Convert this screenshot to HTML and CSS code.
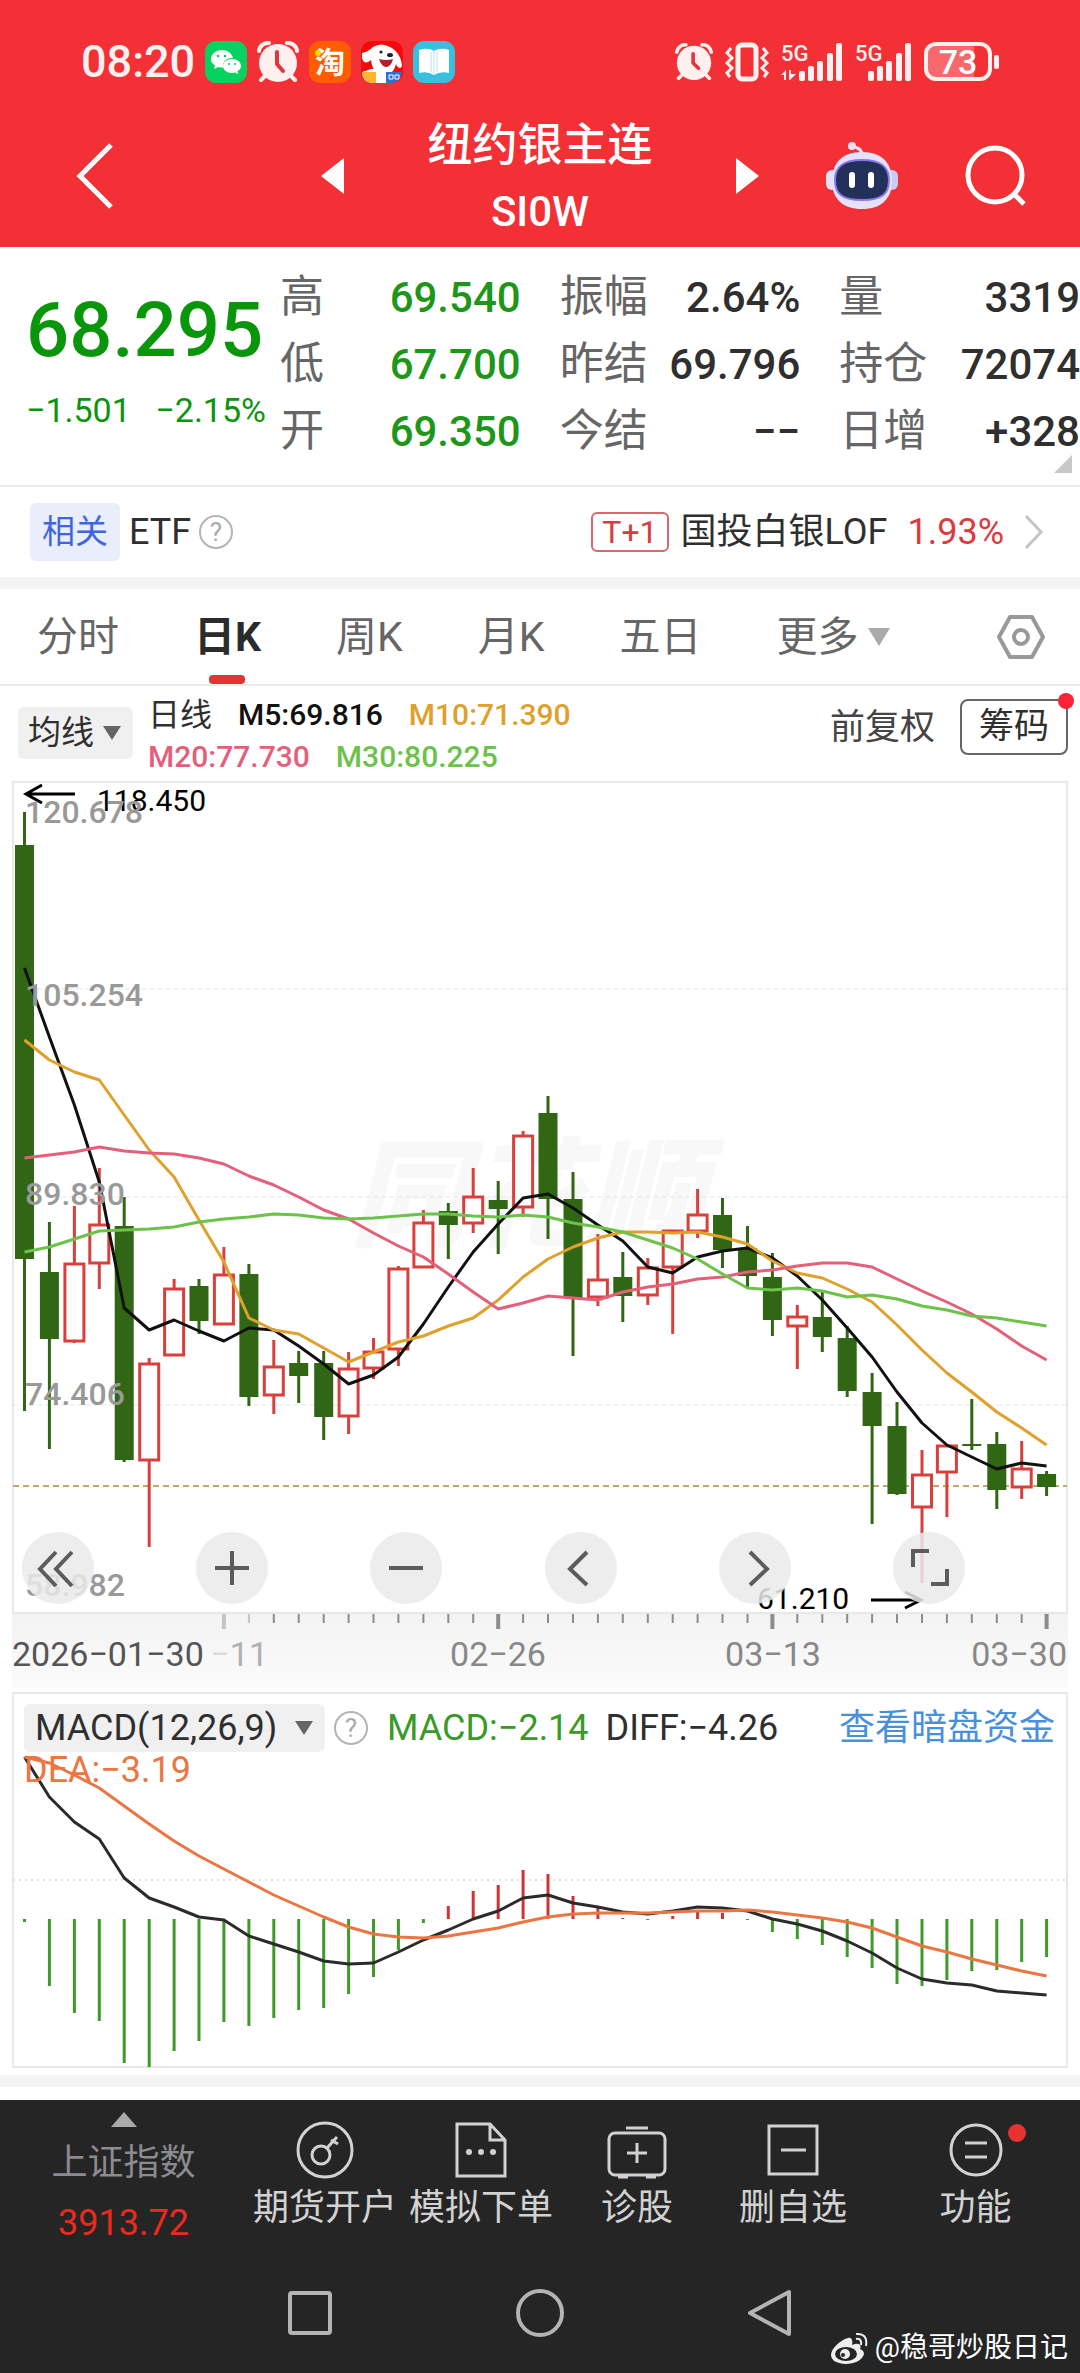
FILE: index.html
```html
<!DOCTYPE html>
<html lang="zh-CN">
<head>
  <meta charset="UTF-8" />
  <meta name="viewport" content="width=device-width, initial-scale=1.0"/>
  <title>纽约银主连</title>
  <link rel="stylesheet" href="styles.css">
</head>
<body>
  <header class="top">
    <div class="status-bar">
      <div class="status-left">
        <span class="clock">08:20</span>
        <svg class="app-icon" viewBox="0 0 42 42">
          <rect width="42" height="42" rx="11" fill="#07d160"/>
          <path d="M17 9c-6 0-11 4-11 9 0 3 1.500 5 4 6.500l-1 3.500 4-2q2 .6 5 .5c-1-6 4-10 10-9.500C27 12 22 9 17 9z" fill="#fff"/>
          <path d="M27 18c-5 0-9 3-9 7s4 7 9 7l3-.5 3 1.800-.6-3c2-1 3.600-3 3.600-5.300 0-4-4-7-9-7z" fill="#fff"/>
          <g fill="#07d160"><circle cx="13" cy="15" r="1.300"/><circle cx="20" cy="15" r="1.300"/><circle cx="24" cy="23" r="1.100"/><circle cx="30" cy="23" r="1.100"/></g>
        </svg>
        <svg class="app-icon" viewBox="0 0 42 42">
          <path d="M2 10a9 9 0 0 1 10-8M40 10a9 9 0 0 0-10-8M9 34l-5 5M33 34l5 5" stroke="#fff0f0" stroke-width="4" stroke-linecap="round" fill="none"/>
          <circle cx="21" cy="22" r="19" fill="#fff0f0"/>
          <path d="M20 11v12l6 7" stroke="#e0373b" stroke-width="4" fill="none" stroke-linecap="round"/>
        </svg>
        <svg class="app-icon" viewBox="0 0 42 42">
          <rect width="42" height="42" rx="11" fill="#ff5c00"/>
          <text x="21" y="32" class="tao">淘</text>
          <circle cx="9" cy="12" r="3" fill="#ffd800"/>
        </svg>
        <svg class="app-icon" viewBox="0 0 42 42">
          <rect width="42" height="42" rx="11" fill="#f5090b"/>
          <path d="M1 12q6-1 11-6 8-5 17 0c6 3 11 9 12 18 0 4-4 4-6-1-2 8-6 11-12 10-8 0-12-5-13-14-4 4-8 3-9-2z" fill="#fff"/>
          <path d="M18 18q7 2 14 0-2 8-7 8-5-1-7-8z" fill="#b3202a"/>
          <ellipse cx="29" cy="14" rx="3" ry="2" fill="#222"/><circle cx="20" cy="11" r="1.600" fill="#222"/>
          <path d="M10 28h16v14H11Q1 41 1 31z" fill="#fff"/>
          <path d="M1 31h14v11h-4Q2 41 1 31z" fill="#ffb62c"/>
          <path d="M25 31h16q-1 10-10 11h-6z" fill="#2f6fdd"/>
          <path d="M28 34h4v4h-4zM34 34h4v4h-4z" fill="none" stroke="#fff"/>
        </svg>
        <svg class="app-icon" viewBox="0 0 42 42">
          <rect width="42" height="42" rx="11" fill="#39c0df"/>
          <path d="M6 9q9-3 15 1 6-4 15-1v23q-9-2-15 2-6-4-15-2z" fill="#fff"/>
          <path d="M21 10v23M24 11v20M18 11v20" stroke="#d8f0f7" stroke-width="2"/>
        </svg>
      </div>
      <div class="status-right">
        <svg width="38" height="42" viewBox="0 0 42 42">
          <path d="M2 10a9 9 0 0 1 10-8M40 10a9 9 0 0 0-10-8M9 34l-5 5M33 34l5 5" stroke="#fff0f0" stroke-width="4" stroke-linecap="round" fill="none"/>
          <circle cx="21" cy="22" r="19" fill="#fff0f0"/>
          <path d="M20 12v10l6 6" stroke="#e0373b" stroke-width="4" fill="none" stroke-linecap="round"/>
        </svg>
        <svg width="44" height="40" viewBox="0 0 44 40" fill="none" stroke="#fff0f0" stroke-width="3">
          <rect x="13" y="3" width="18" height="34" rx="4" stroke-width="5"/>
          <path d="M6 6L2 11l5 5-5 5 5 5-5 5 3 4M38 6l4 5-5 5 5 5-5 5 5 5-3 4"/>
        </svg>
        <svg class="signal" width="62" height="40" viewBox="0 0 62 40" fill="#fff0f0">
          <text x="0" y="19" class="net">5G</text>
          <path d="M0 33l5-5v10H3v-5zM8 28h2v4h5l-6 6H8z"/>
          <rect x="18" y="29" width="6" height="10" rx="2"/><rect x="27" y="24" width="6" height="15" rx="2"/><rect x="36" y="19" width="6" height="20" rx="2"/><rect x="46" y="11" width="6" height="28" rx="2"/><rect x="55" y="1" width="6" height="38" rx="2"/>
        </svg>
        <svg class="signal" width="57" height="40" viewBox="0 0 57 40" fill="#fff0f0">
          <text x="0" y="19" class="net">5G</text>
          <rect x="13" y="29" width="6" height="10" rx="2"/><rect x="22" y="24" width="6" height="15" rx="2"/><rect x="31" y="19" width="6" height="20" rx="2"/><rect x="41" y="11" width="6" height="28" rx="2"/><rect x="50" y="1" width="6" height="38" rx="2"/>
        </svg>
        <svg width="76" height="40" viewBox="0 0 76 40">
          <path d="M12 4h38v32H12q-8 0-8-8V12q0-8 8-8z" fill="#f8696d"/>
          <rect x="2" y="2" width="64" height="35" rx="10" fill="none" stroke="#fff0f0" stroke-width="4"/>
          <rect x="70" y="13" width="5" height="14" rx="2" fill="#fff0f0"/>
          <text x="34" y="32" class="charge">73</text>
        </svg>
      </div>
    </div>
    <nav class="title-bar">
      <button class="icon-btn back" aria-label="返回">
        <svg width="40" height="68" viewBox="0 0 40 68"><path d="M36 3L5 34l31 31" fill="none" stroke="#fff" stroke-width="5"/></svg>
      </button>
      <div class="title-center">
        <button class="icon-btn" aria-label="上一个"><svg width="23" height="36" viewBox="0 0 23 36"><path d="M23 0v36L0 18z" fill="#fff"/></svg></button>
        <h1>纽约银主连<span>SI0W</span></h1>
        <button class="icon-btn" aria-label="下一个"><svg width="23" height="36" viewBox="0 0 23 36"><path d="M0 0v36l23-18z" fill="#fff"/></svg></button>
      </div>
      <div class="title-tools">
        <button class="icon-btn" aria-label="助手">
          <svg width="74" height="68" viewBox="0 0 74 68">
            <path d="M27 5q10 0 11 10" fill="none" stroke="#e6d9fa" stroke-width="3"/><circle cx="27" cy="4" r="4" fill="#f3dcee"/>
            <rect x="1" y="28" width="12" height="20" rx="6" fill="#e3e3fb"/><rect x="61" y="28" width="12" height="20" rx="6" fill="#c9cdf6"/>
            <path d="M37 10c20 0 30 11 30 29S56 67 37 67 7 57 7 39s10-29 30-29z" fill="#e4e3fb"/>
            <path d="M37 18c18 0 27 6 27 20s-7 20-27 20S10 52 10 38s9-20 27-20z" fill="#22305a" stroke="#8a78e8" stroke-width="2"/>
            <rect x="24" y="30" width="6" height="16" rx="3" fill="#fff"/><rect x="43" y="30" width="6" height="16" rx="3" fill="#fff"/>
          </svg>
        </button>
        <button class="icon-btn" aria-label="搜索">
          <svg width="62" height="62" viewBox="0 0 62 62" fill="none" stroke="#fff" stroke-width="5"><circle cx="30" cy="30" r="27"/><path d="M48 48l11 11"/></svg>
        </button>
      </div>
    </nav>
  </header>

  <main>
    <section class="quote">
      <div class="price-box">
        <div class="price">68.295</div>
        <div class="change"><span>−1.501</span><span>−2.15%</span></div>
      </div>
      <dl class="stats">
        <div><dt>高</dt><dd class="down">69.540</dd></div>
        <div><dt>振幅</dt><dd>2.64%</dd></div>
        <div><dt>量</dt><dd>3319</dd></div>
        <div><dt>低</dt><dd class="down">67.700</dd></div>
        <div><dt>昨结</dt><dd>69.796</dd></div>
        <div><dt>持仓</dt><dd>72074</dd></div>
        <div><dt>开</dt><dd class="down">69.350</dd></div>
        <div><dt>今结</dt><dd>−−</dd></div>
        <div><dt>日增</dt><dd>+328</dd></div>
      </dl>
      <svg class="corner" width="18" height="18" viewBox="0 0 18 18"><path d="M18 0v18H0z" fill="#c8c8c8"/></svg>
    </section>

    <section class="related">
      <span class="badge">相关</span>
      <span class="etf">ETF</span>
      <svg class="help" viewBox="0 0 36 36"><circle cx="18" cy="18" r="16"/><text x="18" y="27">?</text></svg>
      <a class="fund" href="#">
        <span class="t1">T+1</span>
        <span>国投白银LOF</span>
        <span class="up">1.93%</span>
        <svg width="20" height="36" viewBox="0 0 20 36"><path d="M2 2l15 16L2 34" fill="none" stroke="#c4c4c4" stroke-width="3"/></svg>
      </a>
    </section>

    <nav class="tabs">
      <button>分时</button>
      <button class="active">日K</button>
      <button>周K</button>
      <button>月K</button>
      <button>五日</button>
      <button class="more">更多<i class="caret"></i></button>
      <button class="settings" aria-label="设置">
        <svg width="50" height="46" viewBox="0 0 50 46" fill="none" stroke="#999" stroke-width="4"><path d="M14 3h22l11 20-11 20H14L3 23z" stroke-linejoin="round"/><circle cx="25" cy="23" r="7"/></svg>
      </button>
    </nav>

    <section class="ma-bar">
      <div class="chip ma-chip">
        <select aria-label="主图指标"><option>均线</option></select>
        <i class="caret"></i>
      </div>
      <div class="ma-legend">
        <div><span class="cycle">日线</span><span class="m5">M5:69.816</span><span class="m10">M10:71.390</span></div>
        <div><span class="m20">M20:77.730</span><span class="m30">M30:80.225</span></div>
      </div>
      <button class="adjust">前复权</button>
      <button class="chips-btn">筹码</button>
    </section>

    <section class="kline">
      <svg id="kline" viewBox="0 0 1080 908">
        <defs>
          <linearGradient id="axisBg" x1="0" y1="0" x2="0" y2="1"><stop offset="0" stop-color="#f3f3f3"/><stop offset="1" stop-color="#fbfbfb"/></linearGradient>
        </defs>
        <rect x="12" y="834" width="1056" height="74" fill="url(#axisBg)"/>
        <rect x="13" y="2" width="1054" height="831" class="frame"/>
        <text x="350" y="457" class="watermark">同花顺</text>
        <path d="M13 209H1067M13 417H1067M13 625H1067" class="grid-line"/>
        <path d="M13 706H1067" class="last-line"/>
        <g id="candles"></g>
        <g id="averages"></g>
        <g class="arrow"><path d="M75 14H26M42 5L26 14l16 9"/><path d="M871 820h50M905 812l16 8-16 8"/></g>
        <g class="extreme"><text x="97" y="31">118.450</text><text x="757" y="829">61.210</text></g>
        <g class="scale">
          <text x="25" y="43">120.678</text>
          <text x="25" y="226">105.254</text>
          <text x="25" y="425">89.830</text>
          <text x="25" y="625">74.406</text>
          <text x="25" y="816">58.982</text>
        </g>
        <g id="ticks"></g>
        <g class="dates">
          <text x="12" y="886" class="first">2026−01−30</text>
          <text x="268" y="886" class="faded" text-anchor="end"><tspan class="ghost">−</tspan>11</text>
          <text x="498" y="886" text-anchor="middle">02−26</text>
          <text x="773" y="886" text-anchor="middle">03−13</text>
          <text x="1067" y="886" text-anchor="end">03−30</text>
        </g>
      </svg>
      <div class="controls">
        <button aria-label="最早"><svg viewBox="0 0 72 72"><path d="M34 20L18 37l16 17M50 20L34 37l16 17"/></svg></button>
        <button aria-label="放大"><svg viewBox="0 0 72 72"><path d="M36 19v34M19 36h34"/></svg></button>
        <button aria-label="缩小"><svg viewBox="0 0 72 72"><path d="M19 36h34"/></svg></button>
        <button aria-label="左移"><svg viewBox="0 0 72 72"><path d="M42 20L25 37l17 16"/></svg></button>
        <button aria-label="右移"><svg viewBox="0 0 72 72"><path d="M31 20l17 17-17 16"/></svg></button>
        <button aria-label="全屏"><svg viewBox="0 0 72 72"><path d="M20 35V19h16M38 52h16V37"/></svg></button>
      </div>
    </section>

    <section class="macd">
      <svg id="macd" viewBox="0 0 1080 380">
        <rect x="13" y="3" width="1054" height="374" class="frame"/>
        <path d="M13 190H1067" class="dot-line"/>
        <g id="macdBars"></g>
        <g id="macdLines"></g>
      </svg>
      <div class="macd-head">
        <div class="chip macd-chip">
          <select aria-label="副图指标"><option>MACD(12,26,9)</option></select>
          <i class="caret"></i>
        </div>
        <svg class="help" viewBox="0 0 36 36"><circle cx="18" cy="18" r="16"/><text x="18" y="27">?</text></svg>
        <span class="macd-value">MACD:−2.14</span>
        <span>DIFF:−4.26</span>
        <a href="#">查看暗盘资金</a>
        <span class="dea-value">DEA:−3.19</span>
      </div>
    </section>
  </main>

  <footer>
    <div class="toolbar">
      <button class="index">
        <svg width="26" height="15" viewBox="0 0 26 15"><path d="M13 0l13 15H0z" fill="#aaa"/></svg>
        <span>上证指数</span>
        <strong>3913.72</strong>
      </button>
      <button>
        <svg viewBox="0 0 60 60"><circle cx="30" cy="30" r="27"/><circle cx="26" cy="35" r="9"/><path d="M32 28l10-11M36 20l7 4"/></svg>
        期货开户
      </button>
      <button>
        <svg viewBox="0 0 60 60"><path d="M6 4h33l15 16v36H6zM39 4v16h15"/><g class="solid"><circle cx="18" cy="32" r="3"/><circle cx="30" cy="32" r="3"/><circle cx="42" cy="32" r="3"/></g></svg>
        模拟下单
      </button>
      <button>
        <svg viewBox="0 0 60 60"><rect x="2" y="13" width="56" height="42" rx="6"/><path d="M19 8h22M30 23v20M20 33h20M11 57h10M39 57h10"/></svg>
        诊股
      </button>
      <button>
        <svg viewBox="0 0 60 60"><rect x="6" y="6" width="48" height="48"/><path d="M18 30h25"/></svg>
        删自选
      </button>
      <button class="has-dot">
        <svg viewBox="0 0 60 60"><circle cx="30" cy="30" r="25"/><path d="M19 23h22M19 37h22"/></svg>
        功能
      </button>
    </div>
    <div class="sys-nav">
      <button aria-label="最近任务"><svg viewBox="0 0 48 48"><rect x="4" y="4" width="40" height="40" rx="2"/></svg></button>
      <button aria-label="主页"><svg viewBox="0 0 48 48"><circle cx="24" cy="24" r="22"/></svg></button>
      <button aria-label="后退"><svg viewBox="0 0 48 48"><path d="M43 3v42L4 24z" stroke-linejoin="round"/></svg></button>
    </div>
    <div class="author">
      <svg width="38" height="32" viewBox="0 0 38 32">
        <path d="M17 6c-8 2-17 11-17 17 0 12 30 12 33-1 0-3-2-4-4-5 2-4-1-7-8-4 1-4 0-8-4-7z" fill="#eee"/>
        <ellipse cx="15" cy="22" rx="11" ry="7" fill="#252525"/><circle cx="14" cy="22" r="5" fill="#eee"/><circle cx="12" cy="23" r="2" fill="#252525"/>
        <path d="M25 7q6-1 5 6M25 2q12-1 10 12" fill="none" stroke="#eee" stroke-width="2"/>
      </svg>
      @稳哥炒股日记
    </div>
  </footer>

  <script>
    const RED = '#d9403c';
    const GREEN = '#306614';
    const firstX = 24.5;
    const stepX = 24.93;

    // direction (1 up, 0 down), high, body top, body bottom, low
    const candles = [
      [0,32,65,479,631],[0,442,492,559,669],[1,426,483,561,563],[1,388,444,483,509],[0,417,446,680,682],
      [1,578,583,680,767],[1,499,508,575,575],[0,499,506,541,554],[1,467,494,544,544],[0,484,494,617,626],
      [1,560,586,615,634],[0,571,583,596,623],[0,571,583,637,660],[1,572,588,636,654],[1,558,571,588,599],
      [1,486,488,569,586],[1,430,442,487,487],[0,423,431,445,479],[1,388,416,443,453],[0,401,420,429,474],
      [1,351,355,427,437],[0,316,333,419,459],[0,392,419,518,576],[1,454,499,517,526],[0,472,497,516,542],
      [1,478,487,515,525],[1,450,450,487,554],[1,409,434,451,458],[0,418,435,470,488],[0,446,468,496,507],
      [0,473,497,540,556],[1,525,536,546,589],[0,512,537,557,572],[0,546,558,611,617],[0,593,612,646,744],
      [0,622,646,714,715],[1,670,694,727,803],[1,665,665,692,737],[0,619,664,666,670],[0,652,664,710,729],
      [1,661,688,707,719],[0,691,694,707,716]
    ];

    const averages = {
      '#111111': [188,257,325,402,528,550,540,551,561,548,550,566,584,604,595,577,544,507,472,444,418,414,428,445,461,487,493,477,471,468,478,496,520,548,577,612,643,665,677,689,683,686],
      '#e0a02c': [260,280,292,300,335,370,397,440,482,538,550,554,568,582,572,562,556,546,538,520,497,479,467,458,452,452,453,452,457,464,481,493,498,509,522,545,570,593,612,632,648,665],
      '#e4607a': [378,375,372,367,371,373,374,378,384,396,405,417,430,439,453,466,477,494,512,529,523,516,518,520,512,507,504,499,497,492,490,486,483,483,487,499,511,522,534,549,566,580],
      '#6cc24a': [472,467,459,451,450,449,447,442,439,437,434,435,438,439,438,436,434,434,436,437,435,437,443,447,452,460,468,479,494,508,510,508,511,517,515,519,526,530,536,538,542,546]
    };

    const macdBars = [232,296,323,331,373,377,361,351,332,336,328,320,318,304,287,260,233,216,201,195,180,184,206,217,228,230,226,222,223,230,242,249,255,267,278,294,296,290,281,280,272,267];
    const macdLines = {
      '#2b2b2b': [67,107,132,149,188,208,217,227,230,246,254,262,271,274,273,262,250,240,229,221,208,205,213,217,222,224,221,217,218,221,229,234,241,251,263,278,289,293,295,301,303,305],
      '#ec7642': [67,73,85,98,116,134,151,166,179,192,205,216,227,237,244,247,248,246,242,238,232,227,224,223,223,223,222,221,221,220,222,225,228,232,238,247,256,262,269,275,281,286]
    };

    function xOf(i) {
      return (firstX + i * stepX).toFixed(1);
    }

    function drawLines(id, lines) {
      document.getElementById(id).innerHTML = Object.entries(lines).map(([color, ys]) =>
        `<polyline points="${ys.map((y, i) => xOf(i) + ',' + y).join(' ')}" stroke="${color}"/>`
      ).join('');
    }

    document.getElementById('candles').innerHTML = candles.map(([up, high, top, bottom, low], i) => {
      const x = +xOf(i);
      if (up) {
        return `<path d="M${x} ${high}V${top}M${x} ${bottom}V${low}" stroke="${RED}" stroke-width="3"/>
          <rect x="${x - 9.5}" y="${top + 1}" width="19" height="${bottom - top - 1}" stroke="${RED}" stroke-width="3" fill="#fff"/>`;
      }
      return `<path d="M${x} ${high}V${low}" stroke="${GREEN}" stroke-width="3"/>
        <rect x="${x - 9.5}" y="${top}" width="19" height="${bottom - top}" fill="${GREEN}"/>`;
    }).join('');

    drawLines('averages', averages);
    drawLines('macdLines', macdLines);

    document.getElementById('macdBars').innerHTML = macdBars.map((y, i) =>
      `<path d="M${xOf(i)} 229V${y}" stroke="${y < 229 ? '#cf3434' : '#3f9a2b'}" stroke-width="3"/>`
    ).join('');

    let ticks = '';
    for (let i = 8; i < candles.length; i++) {
      const major = (i - 8) % 11 === 0;
      const color = i < 10 ? '#c4c4c4' : '#8c8c8c';
      ticks += `<path d="M${xOf(i)} 834v${major ? 15 : 9}" stroke="${color}" stroke-width="${major ? 4 : 2}"/>`;
    }
    document.getElementById('ticks').innerHTML = ticks;
  </script>
</body>
</html>
```

FILE: styles.css
```css
* {
  box-sizing: border-box;
}
body {
  margin: 0;
  background: #fff;
  color: #2f2f2f;
  font-family: Roboto, "Noto Sans CJK SC", sans-serif;
  font-size: 36px;
  line-height: 48px;
}
button, select {
  font: inherit;
  color: inherit;
  background: none;
  border: none;
  padding: 0;
  margin: 0;
  cursor: pointer;
}
a {
  color: inherit;
  text-decoration: none;
}
svg {
  display: block;
  flex-shrink: 0;
}

/* Header */
.top {
  background: #f23035;
  color: #fff;
  padding: 40px 0 2px;
}
.status-bar {
  display: flex;
  justify-content: space-between;
  align-items: center;
  height: 44px;
  padding: 0 80px 0 81px;
}
.status-left {
  display: flex;
  align-items: center;
  gap: 10px;
}
.status-right {
  display: flex;
  align-items: center;
  gap: 12px;
}
.clock {
  font-size: 45px;
  font-weight: 500;
  color: #fff0f0;
}
.app-icon {
  width: 42px;
  height: 42px;
}
.tao {
  fill: #fff;
  font-size: 30px;
  font-weight: 700;
  text-anchor: middle;
}
.signal {
  overflow: visible;
}
.net {
  font-size: 22px;
  font-weight: 500;
}
.charge {
  font-size: 34px;
  font-weight: 500;
  fill: #fff;
  text-anchor: middle;
}
.title-bar {
  display: grid;
  grid-template-columns: 1fr 438px 1fr;
  align-items: center;
  margin-top: 22px;
}
.icon-btn {
  display: block;
}
.back {
  padding-left: 75px;
}
.title-center {
  display: flex;
  justify-content: space-between;
  align-items: center;
}
.title-center h1 {
  margin: 0;
  padding-top: 7px;
  font-size: 45px;
  font-weight: 500;
  line-height: 66px;
  text-align: center;
}
.title-center h1 span {
  display: block;
  font-size: 42px;
}
.title-tools {
  display: flex;
  justify-content: flex-end;
  align-items: center;
  gap: 66px;
  padding-right: 53px;
}

/* Quote */
.quote {
  position: relative;
  display: flex;
  padding: 17px 0 20px 26px;
  border-bottom: 2px solid #ebebeb;
}
.price-box {
  width: 254px;
  padding-top: 22px;
  color: #0a960a;
}
.price {
  font-size: 76px;
  font-weight: 500;
  line-height: 88px;
}
.change {
  display: flex;
  justify-content: space-between;
  width: 240px;
  margin-top: 12px;
  font-size: 34px;
}
.stats {
  flex: 1;
  display: grid;
  grid-template-columns: repeat(3, 1fr);
  column-gap: 39px;
  margin: 0;
}
.stats div {
  display: flex;
  justify-content: space-between;
  line-height: 67px;
}
.stats dt {
  font-size: 44px;
  color: #666;
}
.stats dd {
  margin: 0;
  font-size: 42px;
  font-weight: 500;
}
.stats .down {
  color: #1e961a;
}
.corner {
  position: absolute;
  right: 8px;
  bottom: 12px;
}

/* Related fund */
.related {
  display: flex;
  align-items: center;
  height: 102px;
  padding: 0 36px 0 30px;
  border-bottom: 12px solid #f4f4f4;
}
.badge {
  padding: 5px 12px;
  border-radius: 6px;
  background: #e9eefd;
  color: #3f66e0;
  font-size: 33px;
}
.etf {
  margin: 0 7px 0 9px;
}
.help {
  width: 36px;
  height: 36px;
}
.help circle {
  fill: none;
  stroke: #b4b4b4;
  stroke-width: 2;
}
.help text {
  fill: #aaa;
  font-size: 26px;
  text-anchor: middle;
}
.fund {
  display: flex;
  align-items: center;
  gap: 20px;
  margin-left: auto;
}
.t1 {
  margin-right: -8px;
  padding: 0 9px;
  border: 2px solid #d8686a;
  border-radius: 6px;
  color: #dc3a3e;
  font-size: 32px;
  line-height: 36px;
}
.up {
  color: #dc3a3e;
}

/* Period tabs */
.tabs {
  display: flex;
  align-items: center;
  gap: 75px;
  height: 97px;
  padding: 0 34px 0 37px;
  border-bottom: 2px solid #ebebeb;
  color: #666;
  font-size: 41px;
}
.tabs button {
  position: relative;
  height: 95px;
}
.tabs .active {
  color: #2b2b2b;
  font-weight: 700;
}
.tabs .active::after {
  content: "";
  position: absolute;
  left: 15px;
  bottom: 0;
  width: 36px;
  height: 9px;
  border-radius: 4px;
  background: #e23434;
}
.more {
  display: flex;
  align-items: center;
  gap: 9px;
}
.tabs .settings {
  margin-left: auto;
}
.caret {
  border: 9px solid transparent;
  border-top: 14px solid #666;
  border-bottom: none;
}
.more .caret {
  border-width: 18px 11px 0;
  border-top-color: #aaa;
}

/* Moving averages */
.ma-bar {
  display: flex;
  align-items: center;
  height: 94px;
  padding: 0 12px 0 18px;
}
.chip {
  position: relative;
  border-radius: 6px;
  background: #f0f0f0;
}
.chip select {
  display: block;
  appearance: none;
  height: 52px;
  outline: none;
}
.chip .caret {
  position: absolute;
  right: 12px;
  top: 19px;
  pointer-events: none;
}
.ma-chip select {
  width: 115px;
  padding-left: 10px;
  font-size: 33px;
}
.ma-legend {
  margin-left: 15px;
  padding-top: 6px;
  font-size: 30px;
  font-weight: 500;
  line-height: 42px;
}
.ma-legend div {
  display: flex;
  gap: 26px;
}
.cycle {
  font-size: 32px;
  font-weight: 400;
}
.m5 { color: #111; }
.m10 { color: #e0a02c; }
.m20 { color: #e4607a; }
.m30 { color: #6cc24a; }
.adjust {
  margin-left: auto;
  margin-bottom: 10px;
  font-size: 35px;
  color: #444;
}
.chips-btn {
  position: relative;
  height: 56px;
  margin: 0 0 12px 25px;
  padding: 0 17px;
  border: 2px solid #666;
  border-radius: 8px;
  font-size: 35px;
}
.chips-btn::after {
  content: "";
  position: absolute;
  top: -8px;
  right: -8px;
  width: 16px;
  height: 16px;
  border-radius: 50%;
  background: #fa2436;
}

/* K line chart */
.kline, .macd {
  position: relative;
}
.kline > svg, .macd > svg {
  width: 100%;
}
.frame {
  fill: none;
  stroke: #e8e8e8;
  stroke-width: 2;
}
.watermark {
  font-size: 118px;
  font-weight: 900;
  font-style: italic;
  fill: #f8f8f8;
}
.grid-line {
  stroke: #e6e6e6;
  stroke-dasharray: 5 3;
}
.last-line {
  stroke: #c4a667;
  stroke-width: 2;
  stroke-dasharray: 6 4;
}
.dot-line {
  stroke: #e2e2e2;
  stroke-width: 2;
  stroke-dasharray: 2 4;
}
#averages, #macdLines {
  fill: none;
  stroke-width: 3;
  stroke-linejoin: round;
}
.arrow {
  fill: none;
  stroke: #000;
  stroke-width: 3;
}
.extreme {
  font-size: 30px;
  fill: #000;
}
.scale {
  font-size: 32px;
  font-weight: 500;
  fill: #999;
}
.dates {
  font-size: 34px;
  fill: #888;
}
.dates .first {
  fill: #555;
}
.dates .faded {
  fill: #b0b0b0;
}
.ghost {
  fill: #dcdcdc;
}
.controls {
  position: absolute;
  left: 2%;
  right: 11%;
  top: 752px;
  display: flex;
  justify-content: space-between;
  margin-right: -4px;
}
.controls button {
  width: 72px;
  height: 72px;
  border-radius: 50%;
  background: rgba(234, 234, 234, 0.85);
}
.controls path {
  fill: none;
  stroke: #5c5c5c;
  stroke-width: 4;
}

/* MACD */
.macd {
  margin-top: 2px;
  padding-bottom: 5px;
  border-bottom: 12px solid #f4f4f4;
}
.macd-head {
  position: absolute;
  top: 14px;
  left: 24px;
  right: 25px;
  display: flex;
  flex-wrap: wrap;
  align-items: center;
}
.macd-chip {
  margin-right: 8px;
}
.macd-chip select {
  width: 301px;
  height: 48px;
  padding-left: 11px;
}
.macd-chip .caret {
  top: 17px;
}
.macd-value {
  margin: 0 17px 0 18px;
  color: #3a9a28;
}
.macd-head a {
  margin-left: auto;
  color: #4a8fdc;
}
.dea-value {
  width: 100%;
  line-height: 36px;
  color: #ec7642;
}

/* Bottom */
footer {
  position: relative;
  margin-top: 13px;
  background: #252525;
  color: #d2d2d2;
}
.toolbar {
  display: grid;
  grid-template-columns: 247fr 156fr 156fr 156fr 156fr 209fr;
  height: 153px;
}
.toolbar button {
  position: relative;
  display: flex;
  flex-direction: column;
  align-items: center;
  gap: 4px;
  padding-top: 20px;
  white-space: nowrap;
}
.toolbar svg {
  width: 60px;
  height: 60px;
  fill: none;
  stroke: #d2d2d2;
  stroke-width: 3;
}
.toolbar .solid {
  fill: #d2d2d2;
  stroke: none;
}
.toolbar .index {
  gap: 12px;
  padding-top: 12px;
  color: #8b8b90;
}
.toolbar .index svg {
  width: 26px;
  height: 15px;
  stroke: none;
}
.index strong {
  color: #ea2a1e;
  font-weight: 400;
}
.has-dot::after {
  content: "";
  position: absolute;
  top: 24px;
  right: 54px;
  width: 18px;
  height: 18px;
  border-radius: 50%;
  background: #e83230;
}
.sys-nav {
  display: flex;
  justify-content: center;
  align-items: center;
  gap: 182px;
  height: 120px;
}
.sys-nav svg {
  width: 48px;
  height: 48px;
  fill: none;
  stroke: #b4b4b4;
  stroke-width: 4;
}
.author {
  position: absolute;
  right: 12px;
  bottom: 6px;
  display: flex;
  align-items: center;
  gap: 6px;
  color: #fff;
  font-size: 28px;
  line-height: 38px;
}
```
